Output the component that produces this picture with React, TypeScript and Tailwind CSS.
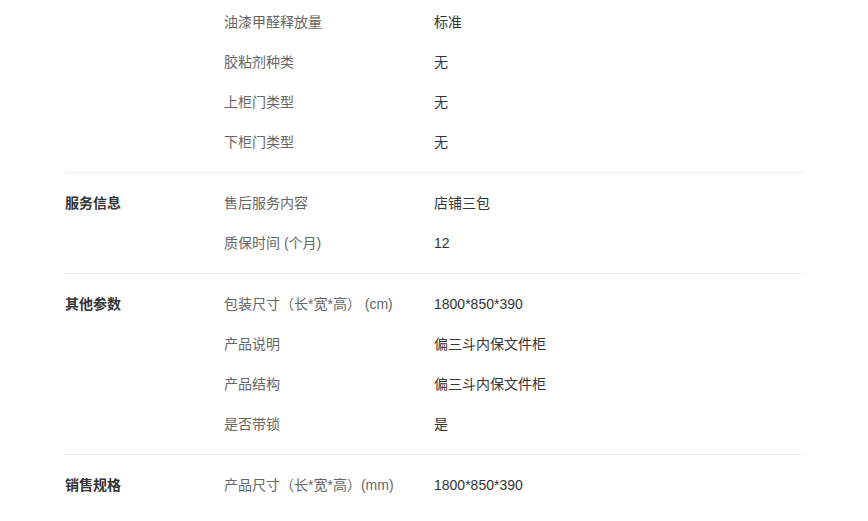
type Row = { k: string; v: string }
type Section = { title: string; rows: Row[] }

const sections: Section[] = [
  {
    title: '',
    rows: [
      { k: '油漆甲醛释放量', v: '标准' },
      { k: '胶粘剂种类', v: '无' },
      { k: '上柜门类型', v: '无' },
      { k: '下柜门类型', v: '无' },
    ],
  },
  {
    title: '服务信息',
    rows: [
      { k: '售后服务内容', v: '店铺三包' },
      { k: '质保时间 (个月)', v: '12' },
    ],
  },
  {
    title: '其他参数',
    rows: [
      { k: '包装尺寸（长*宽*高） (cm)', v: '1800*850*390' },
      { k: '产品说明', v: '偏三斗内保文件柜' },
      { k: '产品结构', v: '偏三斗内保文件柜' },
      { k: '是否带锁', v: '是' },
    ],
  },
  {
    title: '销售规格',
    rows: [{ k: '产品尺寸（长*宽*高）(mm)', v: '1800*850*390' }],
  },
]

export default function App() {
  return (
    <div
      className="w-[868px] h-[521px] overflow-hidden bg-white text-[14px]"
      style={{ fontFamily: '"Liberation Sans", "Noto Sans CJK SC", sans-serif' }}
    >
      <div className="ml-[65px] w-[740px] -mt-[8px]">
        {sections.map((s, i) => (
          <div
            key={i}
            className={`flex py-[10px] ${i < sections.length - 1 ? 'border-b border-[#eeeeee]' : ''}`}
          >
            <div className="w-[159px] shrink-0 h-10 flex items-center font-bold text-[#333333]">{s.title}</div>
            <div className="flex-1">
              {s.rows.map((r, j) => (
                <div key={j} className="flex h-10 items-center">
                  <div className="w-[210px] shrink-0 text-[#666666] whitespace-pre">{r.k}</div>
                  <div className="text-[#333333]">{r.v}</div>
                </div>
              ))}
            </div>
          </div>
        ))}
      </div>
    </div>
  )
}
